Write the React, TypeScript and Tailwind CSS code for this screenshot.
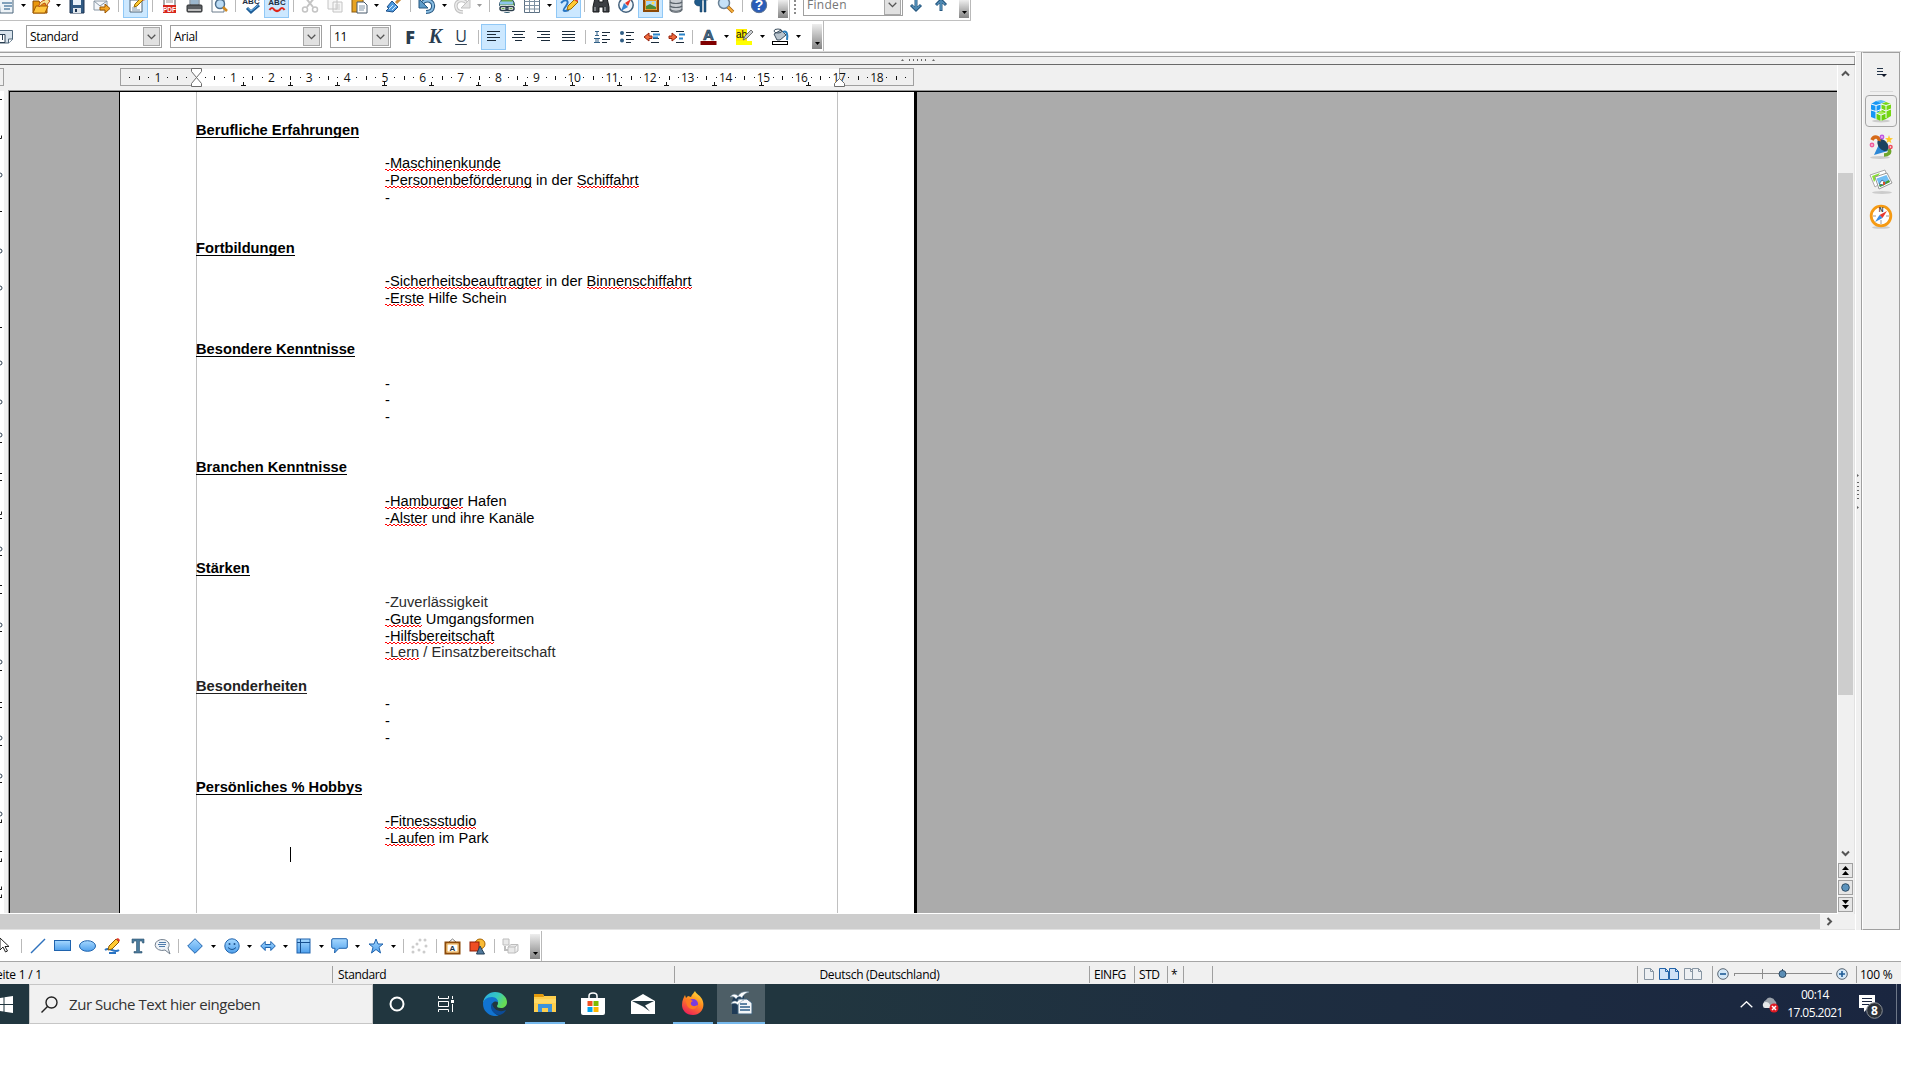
import React from "react";

const UI = "font-['Open_Sans','Noto_Sans',sans-serif]";

function Svg({ w = 20, h = 20, children, className = "" }: { w?: number; h?: number; children: React.ReactNode; className?: string }) {
  return (
    <svg width={w} height={h} viewBox={`0 0 ${w} ${h}`} className={`shrink-0 ${className}`} fill="none">
      {children}
    </svg>
  );
}

function Cell({ children, on = false }: { children: React.ReactNode; on?: boolean }) {
  return (
    <div className={`flex h-[26px] w-[25px] shrink-0 items-center justify-center ${on ? "border border-[#90c8f6] bg-[#cce8ff]" : ""}`}>
      {children}
    </div>
  );
}

function Sep({ className = "w-2" }: { className?: string }) {
  return (
    <div className={`flex h-[22px] shrink-0 justify-center ${className}`}>
      <div className="my-1 w-px bg-[#b9b9b9]" />
    </div>
  );
}

function Drop({ className = "w-[11px]", gray = false }: { className?: string; gray?: boolean }) {
  return (
    <div className={`flex shrink-0 justify-center ${className}`}>
      <svg width="5" height="3" viewBox="0 0 5 3"><path d="M0 0H5L2.5 3Z" fill={gray ? "#999" : "#000"} /></svg>
    </div>
  );
}

function Handle({ className }: { className: string }) {
  return (
    <div className={`flex w-[10px] shrink-0 items-end justify-center bg-gradient-to-b from-[#eeeeee] to-[#858585] pb-1 ${className}`}>
      <svg width="5" height="3" viewBox="0 0 5 3"><path d="M0 0H5L2.5 3Z" fill="#000" /></svg>
    </div>
  );
}

function Chevron() {
  return <svg width="9" height="6" viewBox="0 0 9 6" fill="none"><path d="M.7.8 4.5 4.6 8.3.8" stroke="#555" strokeWidth="1.3" /></svg>;
}

function Combo({ text, className }: { text: string; className: string }) {
  return (
    <div className={`flex h-[23px] shrink-0 items-center border border-[#a0a0a0] bg-white p-px pl-[3px] text-[12px] tracking-[-0.35px] text-black ${className}`}>
      <span className="flex-1 leading-[18px]">{text}</span>
      <span className="flex h-[19px] w-[17px] items-center justify-center border border-[#a8a8a8] bg-[#e1e1e1]"><Chevron /></span>
    </div>
  );
}

/* ---------- standard toolbar icons ---------- */

const Paste = () => (
  <Svg><rect x="2" y="3" width="11" height="14" fill="#e7a321" stroke="#8a5a10" /><path d="M7 7h7l3 3v8H7Z" fill="#fff" stroke="#46596b" /><path d="M9 11h6M9 13h6M9 15h5" stroke="#8296a8" /></Svg>
);

function StandardBar() {
  return (
    <div className="flex h-[20px] w-[971px] items-start overflow-hidden border-r border-[#b9b9b9]">
      <div className="-mt-[8px] flex h-[26px] items-center">
        <div className="-ml-[7px] flex"><Cell><Svg><path d="M3 2h14v16H4Z" fill="#eef3f7" stroke="#4c667c" /><path d="M8 11h8M8 14h6M6 8h10" stroke="#5d86a8" strokeWidth="1.5" /></Svg></Cell></div>
        <Drop className="w-[10px]" />
        <Cell><Svg><path d="M2 6h6l1 2h7v10H2Z" fill="#e9960c" stroke="#8a4a00" /><path d="M2 18 5 11h12l-3 7Z" fill="#ffc63f" stroke="#a35a00" /><path d="M8 12c0-5 3-6 6-7l-1-3 6 4-4 5-1-3c-3 1-4 2-6 4Z" fill="#f7e28d" stroke="#c2541a" /></Svg></Cell>
        <Drop />
        <Cell><Svg><path d="M3 3h14v15H3Z" fill="#315a83" stroke="#1c3350" /><path d="M6 3h8v7H6Z" fill="#e9f2fa" /><path d="M6 13h8v5H6Z" fill="#dfe6ec" /><path d="M8 14h2v3H8Z" fill="#1c3350" /></Svg></Cell>
        <Cell><Svg><path d="M2 6h13v9H2Z" fill="#f4f7fa" stroke="#8a98a5" /><path d="m2 6 6 5 7-5" stroke="#8a98a5" /><path d="M8 12h5V9l5 4.500-5 4.500v-3H8Z" fill="#f5a623" stroke="#9c5700" /></Svg></Cell>
        <Sep className="w-[9px]" />
        <Cell on><Svg><path d="M4 5h12v12H4Z" fill="#fff" stroke="#4e6478" /><path d="M6 13h5M6 15h8" stroke="#7c93a8" /><path d="m8 12 1-3 7-7 2 2-7 7Z" fill="#ffc933" stroke="#9a6a00" /><path d="m15 3 2-1 2 2-1 2Z" fill="#e23b2e" /></Svg></Cell>
        <Sep />
        <Cell><Svg><path d="M5 2h11v15H5Z" fill="#fff" stroke="#555" /><path d="M7 5h7M7 7h7" stroke="#999" /><rect x="4" y="10" width="13" height="8" fill="#d7261c" /><text x="10.500" y="16.500" textAnchor="middle" fontSize="6.500" fontWeight="bold" fill="#fff" fontFamily="Liberation Sans">PDF</text></Svg></Cell>
        <Cell><Svg><path d="M6 2h9v8H6Z" fill="#dbe7f2" stroke="#5a6b7a" /><path d="M7 6h7M7 8h7" stroke="#5d86a8" /><rect x="3" y="10" width="15" height="7" rx="1" fill="#5b5e62" stroke="#2e3033" /><path d="M4 15h13" stroke="#bcbcbc" strokeWidth="2" /></Svg></Cell>
        <Cell><Svg><path d="M3 2h12v15H3Z" fill="#fff" stroke="#6c7d8c" /><circle cx="11" cy="9" r="4.500" fill="#bcdcf5" stroke="#4d6f8e" strokeWidth="1.500" /><path d="m14 12 4 4" stroke="#d28a20" strokeWidth="2.500" /></Svg></Cell>
        <Sep />
        <Cell><Svg><text x="9" y="9" textAnchor="middle" fontSize="8" fontWeight="bold" fill="#1d2f42" fontFamily="Liberation Sans">ABC</text><path d="m5 13 4 4 8-7" stroke="#1d5c96" strokeWidth="3" /><path d="m5.500 13 3.500 3 7.500-6" stroke="#69b4ec" /></Svg></Cell>
        <Cell on><Svg><text x="10" y="9.500" textAnchor="middle" fontSize="8" fontWeight="bold" fill="#1d2f42" fontFamily="Liberation Sans">ABC</text><path d="M2.500 15q2.500-4 5 0 2.500 2 5 0 2.500-4 5 0" stroke="#e0261b" strokeWidth="2.200" /></Svg></Cell>
        <Sep />
        <Cell><Svg><path d="m5 2 8 10M15 2 7 12" stroke="#c4c4c4" strokeWidth="2" /><circle cx="5" cy="14.500" r="2.500" stroke="#c4c4c4" strokeWidth="1.500" /><circle cx="15" cy="14.500" r="2.500" stroke="#c4c4c4" strokeWidth="1.500" /></Svg></Cell>
        <Cell><Svg><path d="M3 3h9v11H3ZM8 7h9v10H8Z" fill="#f7f7f7" stroke="#c4c4c4" /><path d="M10 10h5M10 12h5M10 14h5" stroke="#ccc" /></Svg></Cell>
        <Cell><Paste /></Cell>
        <Drop className="w-[9px]" />
        <Cell><Svg><path d="m18 2-6 6" stroke="#c98b3c" strokeWidth="3" /><path d="m8 6 6 6-5 5-7-1 3-3-2-1Z" fill="#4f9ade" stroke="#1d4f88" /><path d="m5 14 4-4M8 15l4-4" stroke="#d3ebff" /></Svg></Cell>
        <Sep />
        <Cell><Svg><path d="M5 8c5-5 12-2 11 4-.500 4-4 5-7 5" stroke="#27567f" strokeWidth="4" /><path d="M5 8c5-5 12-2 11 4-.500 4-4 5-7 5" stroke="#88bde3" strokeWidth="2" /><path d="M2 4v9h9Z" fill="#5d9bc9" stroke="#27567f" /></Svg></Cell>
        <Drop className="w-[10px]" />
        <Cell><Svg><path d="M15 8C10 3 3 6 4 12c.500 4 4 5 7 5" stroke="#c2c2c2" strokeWidth="3.500" /><path d="M15 8C10 3 3 6 4 12c.500 4 4 5 7 5" stroke="#ececec" strokeWidth="1.500" /><path d="M18 4v9H9Z" fill="#e4e4e4" stroke="#c2c2c2" /></Svg></Cell>
        <Drop gray />
        <Sep className="w-[9px]" />
        <Cell><Svg><circle cx="10" cy="10" r="7.500" fill="#6aa84a" stroke="#2c5472" /><path d="M3 8h13" stroke="#8cc5ec" strokeWidth="3" /><rect x="3" y="11.500" width="8" height="4" rx="2" stroke="#fff" strokeWidth="3" /><rect x="9" y="11.500" width="8" height="4" rx="2" stroke="#fff" strokeWidth="3" /><rect x="3" y="11.500" width="8" height="4" rx="2" stroke="#2d3f4d" strokeWidth="1.500" /><rect x="9" y="11.500" width="8" height="4" rx="2" stroke="#2d3f4d" strokeWidth="1.500" /></Svg></Cell>
        <Cell><Svg><path d="M2.500 2.500h15v15h-15Z" fill="#fff" stroke="#5a6f82" /><path d="M2.500 6.500h15M2.500 10.500h15M2.500 14h15M7.500 2.500v15M12.500 2.500v15" stroke="#7c8fa0" /></Svg></Cell>
        <Drop />
        <div className="w-px" />
        <Cell on><Svg><path d="M2 8c5-5 9-2 5 3s-3 6 3 4" stroke="#2876c4" strokeWidth="2" /><path d="m8 15 1-4 7-7 3 3-7 7Z" fill="#ffc933" stroke="#9a6a00" /><path d="m15 5 2-2 2 2-1 2Z" fill="#e23b2e" /></Svg></Cell>
        <Sep className="w-[7px]" />
        <Cell><Svg><path d="M4 3h4v4h4V3h4l2 9v5h-6v-5H8v5H2v-5Z" fill="#3b3e42" stroke="#17191b" /><path d="M4 12v4M14 12v4" stroke="#94989c" strokeWidth="1.500" /></Svg></Cell>
        <Cell><Svg><circle cx="10" cy="10" r="7.200" fill="#f2f6fa" stroke="#44617c" strokeWidth="1.500" /><path d="m15 4-3 7-3-3Z" fill="#e53224" /><path d="m5 16 3-8 4 4Z" fill="#3484d2" /></Svg></Cell>
        <Cell on><Svg><path d="M3 4h14v12H3Z" fill="#fff" stroke="#8c4a09" strokeWidth="2" /><path d="M4.500 5.500h11v9h-11Z" fill="#a9d5f5" stroke="#e59a2c" /><path d="M5 14v-3l4-2 6 3v2Z" fill="#4c8c36" /><circle cx="12" cy="8" r="1.500" fill="#ffe04d" /></Svg></Cell>
        <Cell><Svg><path d="M4 4v11c0 3 12 3 12 0V4Z" fill="#c9ced3" stroke="#5b646c" /><path d="M4 7c2 2 10 2 12 0M4 11c2 2 10 2 12 0M4 14c2 3 10 3 12 0" stroke="#5b646c" strokeWidth="1.200" /></Svg></Cell>
        <Cell><Svg><path d="M17 3H8C2 3 2 11 8 11h1v6h2V5h2v12h2V5h2Z" fill="#1f5a8a" stroke="#173c5c" strokeWidth=".5" /></Svg></Cell>
        <Cell><Svg><circle cx="8" cy="8" r="5.500" fill="#c5e1f7" stroke="#6b8296" strokeWidth="1.500" /><path d="m12 12 5 5" stroke="#a9620f" strokeWidth="3.500" /><path d="m12 12 5 5" stroke="#f5b13d" strokeWidth="1.800" /></Svg></Cell>
        <Sep />
        <Cell><Svg><circle cx="10" cy="10" r="7.700" fill="#2a5db8" stroke="#5f7490" /><text x="10" y="15" textAnchor="middle" fontSize="14" fontWeight="bold" fill="#fff" fontFamily="Liberation Sans">?</text></Svg></Cell>
      </div>
      <Handle className="ml-[7px] h-[18px]" />
      <div className="ml-px h-5 w-px bg-[#b9b9b9]" />
      <div className="ml-[4px] mt-0 h-[15px] w-[2px] bg-[repeating-linear-gradient(180deg,#8b8b8b_0_2px,transparent_2px_4px)]" />
      <div className="-mt-[7px] ml-[7px] flex"><div className="[&_*]:text-[#767676]"><Combo text="Finden" className="w-[100px] pt-[2px] tracking-[0.3px]" /></div></div>
      <div className="-mt-[8px] flex h-[26px] items-center">
        <Cell><Svg w={14}><path d="M7 5v9M2 10l5 5 5-5" stroke="#285a82" strokeWidth="3" /><path d="M7 5v8M3 10.500l4 4 4-4" stroke="#70b4df" strokeWidth="1" /></Svg></Cell>
        <Cell><Svg w={14}><path d="M7 16V6M2 10l5-5 5 5" stroke="#285a82" strokeWidth="3" /><path d="M7 15V7M3 9.500l4-4 4 4" stroke="#70b4df" strokeWidth="1" /></Svg></Cell>
      </div>
      <Handle className="ml-[6px] h-[18px]" />
    </div>
  );
}

/* ---------- formatting toolbar ---------- */

function Align({ d }: { d: string }) {
  return <Svg w={13} h={12}><path d={d} stroke="#1b2b3a" /></Svg>;
}

function FormatBar() {
  return (
    <div className="flex h-[30px] w-[824px] items-center border-r border-[#b9b9b9] pt-px">
      <div className="w-[26px]"><Svg w={14} h={16}><path d="M0 1.500h12.500v9l-4 3.500H0" fill="#d9e3ec" stroke="#4d6478" /><path d="M8.500 14v-4h4" fill="#fff" stroke="#4d6478" /><path d="M0 5.500h5v8H0M2.500 6v5" fill="#fff" stroke="#2b3f52" /></Svg></div>
      <Combo text="Standard" className="w-[136px]" />
      <Combo text="Arial" className="ml-2 w-[152px]" />
      <Combo text="11" className="ml-2 w-[61px]" />
      <div className="ml-[6px] flex text-center text-[#2a3d50]">
        <div className="w-[26px] text-[18px] font-extrabold leading-[28px]">F</div>
        <div className="w-[25px] font-['Liberation_Serif',serif] text-[20px] font-bold italic leading-[27px]">K</div>
        <div className="w-[26px] text-[16px] leading-[27px] underline decoration-1 underline-offset-2">U</div>
      </div>
      <Sep className="ml-[1px] w-[6px]" />
      <Cell on><Align d="M0 .5h13M0 3.500h9M0 6.500h13M0 9.500h9" /></Cell>
      <Cell><Align d="M0 .5h13M2 3.500h9M0 6.500h13M3 9.500h7" /></Cell>
      <Cell><Align d="M0 .5h13M4 3.500h9M0 6.500h13M4 9.500h9" /></Cell>
      <Cell><Align d="M0 .5h13M0 3.500h13M0 6.500h13M0 9.500h13" /></Cell>
      <Sep />
      <Cell><Svg w={16} h={14}><path d="M1 1.500h4M3 1.500v4M1 5.500h4M0 8.500h6M2 8.500v4M4 8.500v4M0 12.500h6" stroke="#326187" /><path d="M8 2.500h8M8 5.500h5M8 9.500h8M8 12.500h5" stroke="#1b2b3a" /></Svg></Cell>
      <Cell><Svg w={16} h={14}><circle cx="3" cy="3" r="2" fill="#315f86" /><circle cx="3" cy="10.500" r="2" fill="#315f86" /><path d="M7 2.500h8M7 5.500h5M7 9.500h8M7 12.500h5" stroke="#1b2b3a" /></Svg></Cell>
      <Cell><Svg w={17} h={14}><path d="M1 7 6 3v3h3v2.500H6V11Z" fill="#f06a3c" stroke="#96220d" /><path d="M8 1.500h8M10 4.500h7M10 8.500h6M8 12.500h8" stroke="#1b2b3a" /><path d="M10 4.500h7M10 7.500h5" stroke="#2c86ca" strokeWidth="2" /></Svg></Cell>
      <Cell><Svg w={17} h={14}><path d="M9 7 4 3v3H1v2.500h3V11Z" fill="#f06a3c" stroke="#96220d" /><path d="M8 1.500h8M8 12.500h8" stroke="#1b2b3a" /><path d="M11 4.500h6M11 8.500h4" stroke="#2c86ca" strokeWidth="2" /></Svg></Cell>
      <Sep className="w-[7px]" />
      <Cell><Svg w={17} h={17}><text x="8.500" y="11.500" textAnchor="middle" fontSize="15" fontWeight="bold" fill="#456d8e" stroke="#1d364b" strokeWidth=".7" fontFamily="Liberation Sans">A</text><rect x=".5" y="13" width="16" height="4" fill="#800000" /></Svg></Cell>
      <Drop />
      <Cell><Svg w={17} h={17}><rect width="11" height="12" y="1" fill="#ffee00" /><text x="0" y="10" fontSize="10" fill="#111" fontFamily="Liberation Sans">ab</text><path d="m7 12 2-4 6-6 2 2-6 6Z" fill="#c8ccd0" stroke="#555" strokeWidth=".8" /><rect y="13" width="16" height="4" fill="#ffff00" /></Svg></Cell>
      <Drop />
      <Cell><Svg w={17} h={17}><path d="m2 6 7-4 5 5-6 5H5Z" fill="#b9c4cd" stroke="#3e5161" /><ellipse cx="6" cy="3" rx="4" ry="2" stroke="#3e5161" /><path d="M11 4c4-2 5 3 4 8" stroke="#2c7fbb" strokeWidth="2" /><rect x=".5" y="13.500" width="15" height="3" fill="#fff" stroke="#000" /></Svg></Cell>
      <Drop />
      <Handle className="ml-auto mr-px h-[25px]" />
    </div>
  );
}

/* ---------- rulers ---------- */

const CM = 37.85;

function Ruler() {
  const marks: React.ReactNode[] = [];
  for (let q = -7; q <= 75; q++) {
    const x = 196.5 + (q * CM) / 4;
    if (x < 128 || x > 908 || q === 0) continue;
    if (q % 4 === 0) {
      marks.push(
        <text key={q} x={x - 1} y="16.500" textAnchor="middle" fontSize="12" letterSpacing="-0.4" fill="#111">
          {Math.abs(q / 4)}
        </text>
      );
    } else if (q % 2 === 0) {
      marks.push(<rect key={q} x={Math.round(x) - 1} y="11" width="1" height="4" fill="#111" />);
    } else {
      marks.push(<rect key={q} x={Math.round(x) - 1} y="12" width="1" height="1" fill="#111" />);
    }
  }
  const tabs = Array.from({ length: 13 }, (_, i) => Math.round(243 + i * 47.05)).filter((x) => x < 830);
  return (
    <svg width="1837" height="26" viewBox="0 0 1837 26" className={`block ${UI}`}>
      <rect width="1837" height="26" fill="#f0f0f0" />
      <rect x="-1" y="3.500" width="4.500" height="17" fill="#f0f0f0" stroke="#a0a0a0" />
      <rect x="196" y="4" width="643" height="17" fill="#fff" />
      <rect x="120.500" y="3.500" width="76" height="17" fill="#f0f0f0" stroke="#a0a0a0" />
      <rect x="839.500" y="3.500" width="74" height="17" fill="#f0f0f0" stroke="#a0a0a0" />
      {marks}
      {tabs.map((x) => <path key={x} d={`M${x - 2} 20.500h5M${x + 0.5} 17v3`} stroke="#111" />)}
      <path d="M191.500 3.500h10v3l-5 6-5-6ZM191.500 21.500h10v-3l-5-6-5 6Z" fill="#fff" stroke="#6d6d6d" />
      <path d="M834.500 21.500h10v-3l-5-5-5 5Z" fill="#fff" stroke="#6d6d6d" />
      <rect y="25" x="8" width="1829" height="1" fill="#999" />
    </svg>
  );
}

const dashes = [99, 211, 327, 442, 473, 480, 518, 555, 585, 593, 631, 670, 702, 707, 745, 782, 822, 851, 861, 889, 897];
const rounds = [175, 251, 288, 363, 402, 435, 549, 625, 662, 738, 776, 814];
const hooks = [137, 513, 821, 860, 888, 896];

function SideRuler() {
  return (
    <svg width="10" height="822" viewBox="0 0 10 822" className="block shrink-0">
      <rect width="10" height="822" fill="#f0f0f0" />
      <rect width="4" height="822" fill="#fff" />
      {dashes.map((y) => <rect key={y} y={y - 91} width="2" height="1" fill="#111" />)}
      {rounds.map((y) => <path key={y} d={`M0 ${y - 93}q2 0 2 2t-2 2`} stroke="#345" fill="none" />)}
      {hooks.map((y) => <path key={y} d={`M0 ${y - 89.5}h1.500v-3`} stroke="#222" fill="none" />)}
      <rect x="8" width="1" height="822" fill="#999" />
      <rect x="9" width="1" height="822" fill="#000" />
    </svg>
  );
}

/* ---------- document ---------- */

const Sq = ({ children }: { children: React.ReactNode }) => (
  <span className="inline-block h-[17px] align-top [background-image:linear-gradient(90deg,#f00_2px,transparent_2px),linear-gradient(90deg,transparent_2px,#f00_2px)] [background-position:0_14px,0_15px] [background-repeat:repeat-x] [background-size:4px_1px]">
    {children}
  </span>
);

const Head = ({ children, className }: { children: React.ReactNode; className: string }) => (
  <div className={`flex h-[17px] font-bold ${className}`}><span className="h-[16px] border-b border-current">{children}</span></div>
);

const Line = ({ children = "-", className = "" }: { children?: React.ReactNode; className?: string }) => (
  <div className={`h-[17px] pl-[189px] ${className}`}>{children}</div>
);

function Page() {
  return (
    <div className="flex h-[821px] w-[798px] shrink-0 border-l border-r-[3px] border-black bg-white font-['Liberation_Sans',Arial,sans-serif] text-[14.667px] leading-[17px] text-black">
      <div className="ml-[76px] w-[642px] whitespace-pre border-x border-[#c0c0c0]">
        <div className="-ml-px tracking-[0.01px]">
          <Head className="mt-[30px]">Berufliche Erfahrungen</Head>
          <Line className="mt-[16px]"><Sq>-Maschinenkunde</Sq></Line>
          <Line><Sq>-Personenbeförderung</Sq> in der <Sq>Schiffahrt</Sq></Line>
          <Line className="mt-px" />
          <Head className="mt-[33px]">Fortbildungen</Head>
          <Line className="mt-[16px]"><Sq>-Sicherheitsbeauftragter</Sq> in der <Sq>Binnenschiffahrt</Sq></Line>
          <Line><Sq>-Erste</Sq> Hilfe Schein</Line>
          <Head className="mt-[34px]">Besondere Kenntnisse</Head>
          <Line className="mt-[18px]" />
          <Line className="-mt-px" />
          <Line />
          <Head className="mt-[33px]">Branchen Kenntnisse</Head>
          <Line className="mt-[17px]"><Sq>-Hamburger</Sq> Hafen</Line>
          <Line><Sq>-Alster</Sq> und ihre Kanäle</Line>
          <Head className="mt-[33px]">Stärken</Head>
          <Line className="mt-[17px] text-[#2b2b2b]">-Zuverlässigkeit</Line>
          <Line><Sq>-Gute</Sq> Umgangsformen</Line>
          <Line><Sq>-Hilfsbereitschaft</Sq></Line>
          <Line className="-mt-px text-[#2b2b2b]"><Sq>-Lern</Sq> / Einsatzbereitschaft</Line>
          <Head className="mt-[17px] text-[#222]">Besonderheiten</Head>
          <Line className="mt-[1px]" />
          <Line />
          <Line />
          <Head className="mt-[32px]">Persönliches % Hobbys</Head>
          <Line className="mt-[17px]"><Sq>-Fitnessstudio</Sq></Line>
          <Line><Sq>-Laufen</Sq> im Park</Line>
          <div className="ml-[94px] h-[15px] w-px bg-black" />
        </div>
      </div>
    </div>
  );
}

function ScrollButton({ children }: { children: React.ReactNode }) {
  return <div className="mb-[2px] flex h-[15px] w-[15px] items-center justify-center border border-[#a0a0a0] bg-[#e6e6e6]">{children}</div>;
}

function VScroll() {
  return (
    <div className="flex h-[849px] w-[17px] flex-col items-center border-l border-white bg-[#f0f0f0] pr-px">
      <svg width="9" height="7" viewBox="0 0 9 7" className="mt-[5px]" fill="none"><path d="M1 5.500 4.500 2 8 5.500" stroke="#555" strokeWidth="2" /></svg>
      <div className="mt-[96px] h-[522px] w-[15px] bg-[#cdcdcd]" />
      <svg width="9" height="7" viewBox="0 0 9 7" className="mb-[6px] mt-[155px]" fill="none"><path d="M1 1.500 4.500 5 8 1.500" stroke="#555" strokeWidth="2" /></svg>
      <ScrollButton><svg width="7" height="9" viewBox="0 0 7 9"><path d="M3.500 0 7 4H0ZM3.500 5 7 9H0Z" /></svg></ScrollButton>
      <ScrollButton><svg width="9" height="9" viewBox="0 0 9 9"><circle cx="4.500" cy="4.500" r="3.800" fill="#5b93bd" stroke="#2b4a63" /></svg></ScrollButton>
      <ScrollButton><svg width="7" height="9" viewBox="0 0 7 9"><path d="M3.500 4 7 0H0ZM3.500 9 7 5H0Z" /></svg></ScrollButton>
    </div>
  );
}

/* ---------- sidebar ---------- */

function Sidebar() {
  return (
    <div className="flex h-[878px] w-[45px] border-r border-[#a0a0a0] bg-[#f0f0f0]">
      <div className="flex w-[7px] items-center border-x border-white border-r-[#a0a0a0]">
        <svg width="3" height="35" viewBox="0 0 3 35" fill="#666" className="ml-px"><path d="M0 0v3l2-1.500ZM0 32v3l2-1.500ZM0 8h2v1H0ZM0 12h2v1H0ZM0 16h2v1H0ZM0 20h2v1H0ZM0 24h2v1H0Z" /></svg>
      </div>
      <div className="flex flex-1 flex-col items-center border-b border-l border-t border-b-[#a0a0a0] border-l-white border-t-[#a0a0a0]">
        <svg width="10" height="10" viewBox="0 0 10 10" className="ml-[2px] mt-[15px]"><path d="M0 .5h6M0 3.500h6M0 6.500h6" stroke="#24354a" /><path d="M4 6h6L7 9Z" fill="#10182a" /></svg>
        <div className="mt-[13px] h-px w-[23px] bg-[#dadada]" />
        <div className="mt-[3px] flex h-[32px] w-[32px] items-center justify-center rounded border border-[#a6a6a6]">
          <Svg w={22} h={24}>
            <ellipse cx="11" cy="22" rx="9" ry="1.500" fill="#ccc" />
            <path d="M1 5 6 2l5 1.500V9l-5 11-5-2Z" fill="#1597f5" /><path d="m6 2 5-1 5 1.500-5 2Z" fill="#60bdf9" />
            <path d="M11 5l5-2 5 2v12l-5 3-5-1Z" fill="#76d616" /><path d="m6 14 5-2 5 2v6l-5 2-5-2Z" fill="#6ad00d" /><path d="m6 14 5-2 5 2-5 2Z" fill="#a9eb57" />
            <path d="M1 5l5 1.500L11 5M6 6.500V20M1 11l5 1.500 5-2M11 5l5 1.500L21 5M16 6.500V19M11 10l5 2 5-2M11 5v7M6 14l5 2 5-2M11 16v6" stroke="#f5fbff" />
          </Svg>
        </div>
        <div className="mt-[7px]">
          <Svg w={24} h={26}>
            <ellipse cx="11" cy="23.500" rx="10" ry="1.500" fill="#ccc" />
            <path d="m12 6 7 11-14 4Z" fill="#2b87d6" /><ellipse cx="14" cy="11" rx="7" ry="4.500" transform="rotate(50 14 11)" fill="#1b425f" />
            <path d="M3 6c2-5 8-3 7 1" stroke="#d66a18" strokeWidth="3.500" /><path d="M20 15c2 4-1 6-5 6" stroke="#6ea62b" strokeWidth="3.500" />
            <path d="m20 1 1 3 3 .3-2.400 1.900.8 3L20 7.600 17.500 9l.8-3L16 4.300 19 4Z" fill="#ffc928" />
            <circle cx="13" cy="3" r="2.400" fill="#c056e0" /><circle cx="3" cy="11" r="2.400" fill="#f05a9c" /><circle cx="21.500" cy="13" r="2.300" fill="#ee4a5c" />
            <circle cx="13" cy="3" r=".8" fill="#fff" /><circle cx="3" cy="11" r=".8" fill="#fff" /><circle cx="21.500" cy="13" r=".8" fill="#fff" />
          </Svg>
        </div>
        <div className="mt-[9px]">
          <Svg w={24} h={26}>
            <ellipse cx="13" cy="23.500" rx="10" ry="1.500" fill="#ccc" />
            <path d="m1 6 15-5 3 8-13 9Z" fill="#fff" stroke="#aaa" /><path d="m3 7 8-3-6 9Z" fill="#8be035" />
            <path d="m6 8 12-4 5 10-13 6Z" fill="#fff" stroke="#999" /><path d="m7.500 9.500 10-3.500 3.500 7-10 5Z" fill="#71bff4" />
            <path d="m11 18 10-5-1-2-10 5Z" fill="#4a9e24" /><path d="m10 15 3-4 4 3-2 2Z" fill="#fff" stroke="#35628a" strokeWidth=".8" /><path d="M15 16v-3" stroke="#d5512b" strokeWidth="2" />
          </Svg>
        </div>
        <div className="mt-[9px]">
          <Svg w={24} h={25}>
            <ellipse cx="12" cy="23.500" rx="9" ry="1.300" fill="#ccc" />
            <circle cx="12" cy="12" r="9.800" fill="#fff" stroke="#f59a13" strokeWidth="2.800" />
            <path d="M12 16v4M4 12h3M17 12h3" stroke="#999" />
            <text x="12" y="8" textAnchor="middle" fontSize="6.500" fontWeight="bold" fill="#333" fontFamily="Liberation Sans">N</text>
            <path d="m18 7-4.500 7-3-3Z" fill="#e8382f" /><path d="m6 18 4.500-7 3 3Z" fill="#3a8be0" />
          </Svg>
        </div>
      </div>
    </div>
  );
}

/* ---------- drawing toolbar ---------- */

function DrawBar() {
  const b = { fill: "url(#blue)", stroke: "#1f63ad" };
  return (
    <div className="flex h-[30px] w-[542px] items-center border-r border-[#b9b9b9]">
      <div className="w-[18px]"><Svg w={12} h={18}><linearGradient id="blue" x2="0" y2="1"><stop stopColor="#a6d8ff" /><stop offset="1" stopColor="#4fa0ec" /></linearGradient><path d="M0 1v12l3-3 2.500 5 2-1L5 9.500h4Z" fill="#fff" stroke="#222" /></Svg></div>
      <Sep className="w-[7px]" />
      <Cell><Svg w={16} h={16}><path d="M1 15 15 1" stroke="#2f72bd" strokeWidth="1.500" /></Svg></Cell>
      <Cell><Svg w={17} h={12}><rect x=".5" y=".5" width="16" height="10" {...b} /></Svg></Cell>
      <Cell><Svg w={17} h={12}><ellipse cx="8.500" cy="6" rx="8" ry="5.300" {...b} /></Svg></Cell>
      <Cell><Svg w={17} h={17}><path d="M1 12c5-4 9 4 14 0M5 15h7" stroke="#2a74c4" strokeWidth="2" /><path d="m4 12 1-4 7-7 3 3-7 7Z" fill="#ffc933" stroke="#8d5b00" /><path d="m12 1 3 3 1-2-2-2Z" fill="#e23b2e" /></Svg></Cell>
      <Cell><Svg w={16} h={16}><path d="M2 1h12v4h-1.500L12 3H9.500v10.500H12V15H4v-1.500h2.500V3H4l-.5 2H2Z" fill="#4b7b9c" stroke="#2b526e" strokeWidth=".6" /></Svg></Cell>
      <Cell><Svg w={17} h={17}><path d="M11 12a7 5.500 0 1 1 3-2l2 6Z" fill="#eef2f7" stroke="#74818f" /><path d="M5 4.500h7M4 6.500h8M5 8.500h6" stroke="#4e7bab" /></Svg></Cell>
      <Sep className="w-[7px]" />
      <Cell><Svg w={16} h={16}><path d="m8 .7 7.300 7.300L8 15.300.7 8Z" {...b} /></Svg></Cell><Drop className="w-[12px]" />
      <Cell><Svg w={16} h={16}><circle cx="8" cy="8" r="7.200" {...b} /><circle cx="5.500" cy="6" r="1" fill="#1c528e" /><circle cx="10.500" cy="6" r="1" fill="#1c528e" /><path d="M4 9.500q4 4 8 0" stroke="#1c528e" /></Svg></Cell><Drop />
      <Cell><Svg w={16} h={12}><path d="m.7 6 4.500-4.500v3h5.600v-3L15.300 6l-4.500 4.500v-3H5.200v3Z" {...b} /></Svg></Cell><Drop />
      <Cell><Svg w={16} h={16}><rect x="1" y="1" width="13" height="14" {...b} /><path d="M4.500 1v14M1 4.500h13" stroke="#174f8f" /></Svg></Cell><Drop />
      <Cell><Svg w={17} h={16}><path d="M2 .7h13q1.300 0 1.300 1.300v7q0 1.300-1.300 1.300H8L3.500 15l.5-4.700H2Q.7 10.300.7 9V2Q.7.7 2 .7Z" {...b} /></Svg></Cell><Drop />
      <Cell><Svg w={16} h={16}><path d="m8 1 2 5h5l-4 3.300L12.500 15 8 11.500 3.500 15 5 9.300 1 6h5Z" {...b} /></Svg></Cell><Drop />
      <Sep className="w-[8px]" />
      <Cell><Svg w={17} h={16}><g fill="#ccc"><circle cx="9" cy="2" r="1.500" /><circle cx="14" cy="2" r="1.500" /><circle cx="6" cy="6" r="1.500" /><circle cx="2" cy="9" r="1.500" /><circle cx="2" cy="14" r="1.500" /><circle cx="8" cy="12" r="1.500" /><circle cx="15" cy="8" r="1.500" /><circle cx="13" cy="14" r="1.500" /></g></Svg></Cell>
      <Sep />
      <Cell><Svg w={17} h={17}><path d="m5 4 3.500-3L12 4" stroke="#777" /><rect x="1.500" y="4.500" width="14" height="11" fill="#fff" stroke="#8c4a09" strokeWidth="2" /><rect x="3" y="6" width="11" height="8" stroke="#eda93e" /><text x="8.500" y="13" textAnchor="middle" fontSize="8" fontWeight="bold" fill="#1d364b" fontFamily="Liberation Sans">A</text></Svg></Cell>
      <Cell><Svg w={17} h={17}><circle cx="11" cy="6" r="5" fill="#f9bb35" stroke="#a86400" /><rect x="1" y="4" width="9" height="9" fill="#ee4e23" stroke="#8d1f06" /><path d="m11 8 4.500 8h-8Z" fill="#51799b" stroke="#233f56" /></Svg></Cell>
      <Sep />
      <Cell><Svg w={17} h={17}><path d="M1 1h6v6H1ZM6 9h7v6H6ZM6 9l3-2.500h7L13 9M16 6.500V13l-3 2" fill="#e9e9e9" stroke="#bdbdbd" /><path d="M3 8v4h3" stroke="#bdbdbd" strokeWidth="2" /></Svg></Cell>
      <Handle className="ml-auto mr-px h-[25px]" />
    </div>
  );
}

/* ---------- status bar ---------- */

const Stat = ({ children, className }: { children?: React.ReactNode; className: string }) => (
  <div className={`flex h-[17px] shrink-0 items-center whitespace-pre border-r border-[#a0a0a0] ${className}`}>{children}</div>
);

const PageGlyph = ({ blue = false }: { blue?: boolean }) => (
  <Svg w={10} h={12}><path d="M.5.5h6l3 3v8h-9Z" fill={blue ? "#cfe2f7" : "#edf0f3"} stroke={blue ? "#2464a8" : "#8795a2"} /><path d="M6.500.5v3h3" stroke={blue ? "#2464a8" : "#8795a2"} /></Svg>
);

const ZoomDot = ({ d }: { d: string }) => (
  <Svg w={12} h={12}><circle cx="6" cy="6" r="5.300" fill="#d4e8f8" stroke="#5a6672" /><path d={d} stroke="#1f5c96" strokeWidth="1.600" /></Svg>
);

function StatusBar() {
  return (
    <div className="flex h-[23px] w-[1901px] items-center border-t border-[#a6a6a6] bg-[#f0f0f0] pt-[2px] text-[12px] tracking-[-0.45px] text-black [&_span]:pt-px">
      <Stat className="w-[333px]"><span className="-ml-[4px] tracking-[-0.25px]">eite 1 / 1</span></Stat>
      <Stat className="w-[342px] pl-[5px] tracking-[-0.35px]"><span>Standard</span></Stat>
      <Stat className="w-[415px] justify-center pr-[5px] tracking-[-0.3px]"><span>Deutsch (Deutschland)</span></Stat>
      <Stat className="w-[45px] pl-1"><span>EINFG</span></Stat>
      <Stat className="w-[33px] pl-1"><span>STD</span></Stat>
      <Stat className="w-[16px] pl-[3px]"><span>*</span></Stat>
      <Stat className="w-[29px]" />
      <Stat className="w-[425px]" />
      <Stat className="w-[75px] pl-[6px]">
        <PageGlyph />
        <div className="ml-[5px] flex"><PageGlyph blue /><PageGlyph blue /></div>
        <div className="ml-[5px] flex"><PageGlyph /><div className="-ml-[2px]"><PageGlyph /></div></div>
      </Stat>
      <Stat className="w-[144px] pl-1">
        <ZoomDot d="M3 6h6" />
        <Svg w={98} h={14} className="ml-[5px]"><path d="M0 6.500h98M.5 7v2M28.500 2v10" stroke="#8c8c8c" /><circle cx="48.500" cy="7" r="3.500" fill="#5a8db5" stroke="#2d4a63" /><path d="M48.500 2v2" stroke="#2d4a63" /></Svg>
        <div className="ml-[4px]"><ZoomDot d="M3 6h6M6 3v6" /></div>
      </Stat>
      <span className="ml-[3px] tracking-[-0.25px]">100 %</span>
    </div>
  );
}

/* ---------- taskbar ---------- */

const Task = ({ children, className }: { children: React.ReactNode; className: string }) => (
  <div className={`flex h-10 shrink-0 items-center justify-center ${className}`}>{children}</div>
);

function Taskbar() {
  return (
    <div className="flex h-[40px] w-[1901px] bg-[linear-gradient(90deg,#21363f_0%,#21363f_42%,#1e2e40_65%,#1a2640_100%)] text-white">
      <div className="flex w-[29px] items-center"><Svg w={13} h={17}><path d="M0 2 3.500 1.500V8H0ZM4.500 1.300 13 0v8H4.500ZM0 9h3.500v6.500L0 15ZM4.500 9H13v8l-8.500-1.200Z" fill="#fff" /></Svg></div>
      <div className="flex w-[344px] items-center border border-[#c6c6c6] bg-[#f1f1f1] pl-[11px] text-[#333]">
        <Svg w={17} h={17}><circle cx="10.500" cy="6.500" r="5.500" stroke="#222" strokeWidth="1.400" /><path d="m6.500 10.500-6 6" stroke="#222" strokeWidth="1.400" /></Svg>
        <span className="ml-[11px] whitespace-nowrap text-[15px] tracking-[-0.45px]">Zur Suche Text hier eingeben</span>
      </div>
      <Task className="w-[48px]"><Svg w={16} h={16}><circle cx="8" cy="8" r="6.500" stroke="#fff" strokeWidth="2" /></Svg></Task>
      <Task className="w-[49px]"><Svg w={16} h={16}><path d="M.5 0v2.500h10V0M.5 16v-2.500h10V16M.5 5.500h10v5H.5ZM14.500 0v3M14.500 8v8" stroke="#fff" /><rect x="13" y="4" width="3" height="3" fill="#fff" /></Svg></Task>
      <Task className="w-[50px]">
        <Svg w={24} h={24}>
          <linearGradient id="eg" x2="1" y2=".4"><stop stopColor="#2aa9e8" /><stop offset=".6" stopColor="#35c8c0" /><stop offset="1" stopColor="#67dc55" /></linearGradient>
          <path d="M0 11C1 4 6 0 12 0c7 0 12 5 12 10 0 4-3 6-6 6-3 0-4-1-4-2s1-1 1-3c0-3-3-5-6-5-4 0-7 2-9 5Z" fill="url(#eg)" />
          <path d="M0 12c0-4 4-7 9-7 4 0 6 3 6 5-4-2-8 2-6 7 1 3 4 6 7 6.500C8 26 0 20 0 12Z" fill="#1173d0" />
          <path d="M9 11c-3 5 1 12 8 12 3-1 5-3 6-5-6 3-13 0-14-7Z" fill="#0c4b97" />
        </Svg>
      </Task>
      <Task className="w-[50px]">
        <div className="flex h-10 w-10 items-center justify-center border-b-2 border-[#76b9ed]">
          <Svg w={22} h={19}><path d="M0 0h9l1 2h12v16H0Z" fill="#ffcf4d" /><path d="M0 0h9l1 3H0Z" fill="#e39a0c" /><path d="M4 18v-8h14v8h-4v-4H8v4Z" fill="#3c93dc" /><path d="M0 5h22v4H0Z" fill="#ffd966" /></Svg>
        </div>
      </Task>
      <Task className="w-[49px] pr-[3px]"><Svg w={24} h={24}><path d="M8 6V4q0-3 4-3t4 3v2" stroke="#fff" strokeWidth="1.500" /><path d="M0 6h24v15q0 2-2 2H2q-2 0-2-2Z" fill="#fff" /><path d="M6.500 9h5v5h-5Z" fill="#f25022" /><path d="M12.500 9h5v5h-5Z" fill="#7fba00" /><path d="M6.500 15h5v5h-5Z" fill="#00a4ef" /><path d="M12.500 15h5v5h-5Z" fill="#ffb900" /></Svg></Task>
      <Task className="w-[49px] pr-[2px]"><Svg w={24} h={20}><path d="M0 7 12 0l12 7v13H0Z" fill="#fff" /><path d="M1 7h22l-9 4.500 5 6-7-5Z" fill="#21363f" /></Svg></Task>
      <Task className="w-[49px]">
        <div className="flex h-10 w-10 items-center justify-center border-b-2 border-[#76b9ed]">
          <Svg w={24} h={24}>
            <linearGradient id="ff" x1=".8" x2=".3" y2="1"><stop stopColor="#ffe13d" /><stop offset=".45" stopColor="#ff8a1e" /><stop offset="1" stopColor="#ee1e5a" /></linearGradient>
            <path d="M1 14C1 9 3 6 4 4l1 3 2-2 3 1c1-3 3-4 4-6 1 3 5 4 7 8 4 8-1 16-9 16C5 24 1 19 1 14Z" fill="url(#ff)" />
            <circle cx="12" cy="13" r="5" fill="#7a3be0" /><path d="M5 9c3-1 5 0 7 1-3 1-3 4 0 5 2 .5 3-.5 5-1-1 4-5 5-8 3.500C6 16 5 12 5 9Z" fill="#ff7b22" />
          </Svg>
        </div>
      </Task>
      <div className="flex w-[48px] items-center justify-center border-b-2 border-[#76b9ed] bg-[#4d5e66]">
        <Svg w={23} h={24}><path d="M4 5h10v18H2V10Z" fill="#1f3b57" /><path d="M8 8h9l5 4v11H8Z" fill="#f3f6f9" stroke="#41627d" /><path d="M10 13h7M10 16h10M10 19h10" stroke="#2d5d88" strokeWidth="1.500" /><path d="M0 6c3-4 6-3 8-1 2-4 7-5 11-4-4 1-6 3-7 6-2-2-4-2-6 1-1-2-3-3-6-2ZM1 13c2-4 5-3 6-2 2-3 5-3 7-2-3 1-5 3-6 5-2-2-4-2-7-1Z" fill="#fff" stroke="#7590a5" strokeWidth=".6" /></Svg>
      </div>
      <div className="ml-auto flex h-10 items-center">
        <Svg w={13} h={7}><path d="M.7 6.300 6.500.7l5.800 5.600" stroke="#fff" strokeWidth="1.300" /></Svg>
        <Svg w={17} h={16} className="ml-[9px] mt-[2px]"><path d="M3 10a4 4 0 0 1 1-7 5 5 0 0 1 9 1q2 1 1 4L8 11Z" fill="#9ca3ab" /><path d="M1 9a3 3 0 0 1 3-4q3 0 4 3v3H3q-2 0-2-2Z" fill="#e6e8ea" /><circle cx="12" cy="11" r="4.500" fill="#e01b24" /><path d="m10 9 4 4m0-4-4 4" stroke="#fff" strokeWidth="1.500" /></Svg>
        <div className="ml-[7px] w-[58px] text-center text-[12px] leading-[18px] tracking-[-0.55px]"><div>00:14</div><div>17.05.2021</div></div>
        <Svg w={25} h={26} className="ml-[15px] mr-[12px] mt-[5px]"><path d="M0 1h16v13H9l-4 4v-4H0Z" fill="#fff" /><path d="M3 4.500h10M3 7.500h10M3 10.500h10" stroke="#1a2640" /><circle cx="15.500" cy="16.500" r="7.800" fill="#2b3138" stroke="#8a8f96" /><text x="15.500" y="20.800" textAnchor="middle" fontSize="12" fill="#fff" fontWeight="bold">8</text></Svg>
        <div className="mr-[4px] h-10 w-px bg-[#6d7788]" />
      </div>
    </div>
  );
}

export default function App() {
  return (
    <div className={`flex h-[1080px] w-[1920px] flex-col overflow-hidden bg-white ${UI}`}>
      <StandardBar />
      <div className="h-px w-[971px] bg-[#c0c0c0]" />
      <FormatBar />
      <div className="h-px w-[1901px] bg-[#d9d9d9]" />
      <div className="flex h-[878px] w-[1900px]">
        <div className="flex w-[1855px] flex-col">
          <div className="h-px shrink-0 bg-[#a0a0a0]" />
          <div className="h-[3px] shrink-0 bg-[#f8f8f8]" />
          <div className="flex h-[8px] shrink-0 items-start border-r border-t border-[#a0a0a0] bg-[#f0f0f0]">
            <svg width="34" height="4" viewBox="0 0 34 4" className="ml-[901px] mt-px" fill="#666"><path d="M0 3h3L1.500 1ZM31 3h3l-1.500-2ZM8 1h1v2H8ZM12 1h1v2h-1ZM16 1h1v2h-1ZM20 1h1v2h-1ZM24 1h1v2h-1Z" /></svg>
          </div>
          <div className="h-px shrink-0 bg-[#696969]" />
          <div className="flex h-[849px] shrink-0">
            <div className="w-[1837px]">
              <Ruler />
              <div className="flex h-[822px] overflow-hidden bg-[#ababab]">
                <SideRuler />
                <div className="flex h-[822px] flex-1 flex-col border-t border-black">
                  <div className="flex pl-[109px]"><Page /></div>
                </div>
              </div>
              <div className="h-px bg-white" />
            </div>
            <VScroll />
            <div className="w-px bg-[#e2e2e2]" />
          </div>
          <div className="flex h-[15px] shrink-0 items-center bg-[#f0f0f0]">
            <div className="h-[15px] w-[1820px] bg-[#cdcdcd]" />
            <svg width="7" height="9" viewBox="0 0 7 9" className="ml-[6px]" fill="none"><path d="M1.500 1 5 4.500 1.500 8" stroke="#555" strokeWidth="2" /></svg>
          </div>
          <div className="h-px shrink-0 bg-[#e3e3e3]" />
        </div>
        <Sidebar />
      </div>
      <div className="h-px" />
      <DrawBar />
      <StatusBar />
      <Taskbar />
    </div>
  );
}
